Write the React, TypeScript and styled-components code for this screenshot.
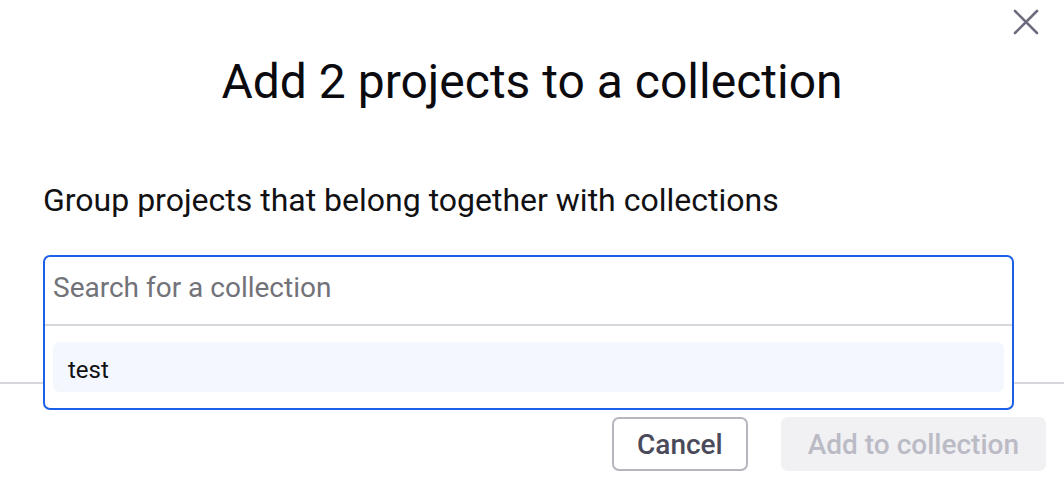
import React from "react";
import styled, { createGlobalStyle } from "styled-components";

const Global = createGlobalStyle`
  html, body { margin: 0; padding: 0; background: #ffffff; }
  body { font-family: Roboto, "Noto Sans", Arial, sans-serif; color: #111; }
  * { box-sizing: border-box; }
`;

const Dialog = styled.div`
  position: relative;
  width: 1064px;
  height: 494px;
  background: #fff;
  display: flex;
  flex-direction: column;
  overflow: hidden;
`;

const CloseButton = styled.button`
  position: absolute;
  top: 5px;
  right: 21px;
  width: 34px;
  height: 34px;
  padding: 0;
  border: none;
  background: transparent;
  display: flex;
  align-items: center;
  justify-content: center;
  cursor: pointer;
`;

const Title = styled.h1`
  margin: 53px 0 0;
  text-align: center;
  font-size: 48px;
  font-weight: 400;
  line-height: 58px;
  color: #0b0b0f;
`;

const Body = styled.div`
  padding: 0 50px 0 43px;
  display: flex;
  flex-direction: column;
`;

const Subtitle = styled.p`
  margin: 69px 0 0;
  font-size: 32px;
  line-height: 40px;
  color: #111114;
`;

const Combo = styled.div`
  position: relative;
  margin-top: 35px;
  height: 71px;
  z-index: 2;
`;

const Panel = styled.div`
  position: absolute;
  top: 0;
  left: 0;
  right: 0;
  background: #fff;
  border: 2px solid #1c5fe8;
  border-radius: 7px;
`;

const SearchInput = styled.input`
  display: block;
  width: 100%;
  height: 69px;
  border: none;
  border-bottom: 2px solid #d6d6dc;
  outline: none;
  padding: 0 8px 6px;
  font-family: inherit;
  font-size: 28px;
  color: #111;
  background: transparent;
  &::placeholder { color: #727279; }
`;

const List = styled.ul`
  list-style: none;
  margin: 0;
  padding: 16px 8px;
`;

const Option = styled.li<{ $active?: boolean }>`
  height: 50px;
  display: flex;
  align-items: center;
  padding: 5px 15px 0;
  border-radius: 7px;
  font-size: 24px;
  color: #111;
  background: ${(p) => (p.$active ? "#f4f7fe" : "transparent")};
`;

const Footer = styled.div`
  margin-top: auto;
  height: 112px;
  border-top: 2px solid #d6d6dc;
  display: flex;
  justify-content: flex-end;
  align-items: flex-start;
  gap: 33px;
  padding: 33px 18px 0 0;
`;

const Button = styled.button<{ $variant: "outline" | "disabled" }>`
  height: 54px;
  padding: 0 ${(p) => (p.$variant === "outline" ? "23px" : "27px")};
  border-radius: 7px;
  font-family: inherit;
  font-size: 28px;
  font-weight: 500;
  cursor: ${(p) => (p.$variant === "disabled" ? "default" : "pointer")};
  border: ${(p) => (p.$variant === "outline" ? "2px solid #b6b6c0" : "none")};
  background: ${(p) => (p.$variant === "outline" ? "#fff" : "#f1f1f4")};
  color: ${(p) => (p.$variant === "outline" ? "#4a4a5a" : "#bbbbc6")};
`;

export default function App() {
  return (
    <>
      <Global />
      <Dialog>
        <CloseButton aria-label="Close">
          <svg width="26" height="26" viewBox="0 0 26 26">
            <path d="M2 2 L24 24 M24 2 L2 24" stroke="#6c6c7e" strokeWidth="2.6" strokeLinecap="round" />
          </svg>
        </CloseButton>
        <Title>Add 2 projects to a collection</Title>
        <Body>
          <Subtitle>Group projects that belong together with collections</Subtitle>
          <Combo>
            <Panel>
              <SearchInput placeholder="Search for a collection" />
              <List>
                <Option $active>test</Option>
              </List>
            </Panel>
          </Combo>
        </Body>
        <Footer>
          <Button $variant="outline">Cancel</Button>
          <Button $variant="disabled" disabled>Add to collection</Button>
        </Footer>
      </Dialog>
    </>
  );
}
